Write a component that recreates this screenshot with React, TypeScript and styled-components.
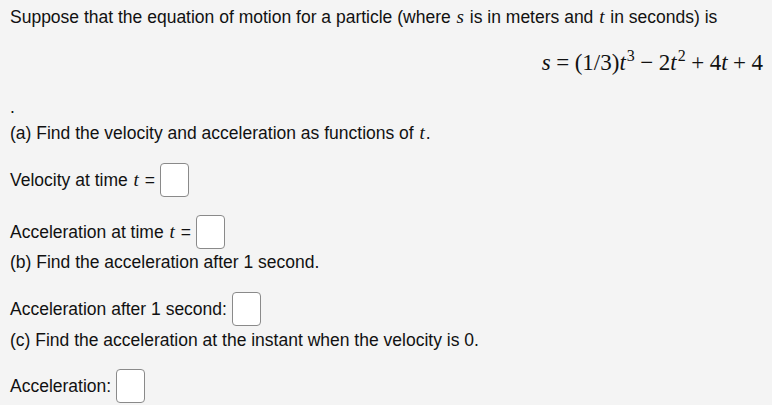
import styled, { createGlobalStyle } from 'styled-components';

const GlobalStyle = createGlobalStyle`
  html, body {
    margin: 0;
    padding: 0;
    background: #f4f4f4;
  }
  body {
    font-family: 'Liberation Sans', Arial, sans-serif;
    color: #111;
  }
`;

// --- Styled components ---
const Wrapper = styled.div`
  padding: 7px 10px 0 10px;
  font-size: 17.5px;
  line-height: 20px;
`;

const Text = styled.div<{ $top?: number }>`
  margin-top: ${(p) => p.$top ?? 0}px;
  white-space: nowrap;
`;

const Var = styled.span`
  font-family: 'Liberation Serif', 'Times New Roman', serif;
  font-style: italic;
  font-size: 19px;
  padding: 0 1px;
`;

const Equation = styled.div`
  text-align: right;
  margin-right: -1px;
  margin-top: 22px;
  height: 28px;
  font-family: 'Liberation Serif', 'Times New Roman', serif;
  font-size: 23px;
  line-height: 28px;
  white-space: nowrap;

  i {
    font-style: italic;
  }
`;

const Sup = styled.span`
  font-size: 16px;
  line-height: 0;
  position: relative;
  top: -9px;
  margin-left: 1px;
`;

const Op = styled.span`
  padding: 0 5.5px;
`;

const AnswerRow = styled.div<{ $top: number }>`
  display: flex;
  align-items: center;
  gap: 5px;
  height: 34px;
  margin-top: ${(p) => p.$top}px;
  white-space: nowrap;
`;

const AnswerBox = styled.span`
  display: inline-block;
  box-sizing: border-box;
  width: 29px;
  height: 34px;
  background: #fff;
  border: 1px solid #8a8a8a;
  border-radius: 4px;
`;

export default function App() {
  return (
    <>
      <GlobalStyle />
      <Wrapper>
        <Text>
          Suppose that the equation of motion for a particle (where <Var>s</Var> is in meters
          and <Var>t</Var> in seconds) is
        </Text>
        <Equation>
          <i>s</i>
          <Op>=</Op>
          (1/3)<i>t</i>
          <Sup>3</Sup>
          <Op>−</Op>2<i>t</i>
          <Sup>2</Sup>
          <Op>+</Op>4<i>t</i>
          <Op>+</Op>4
        </Equation>
        <Text $top={20}>.</Text>
        <Text $top={6}>
          (a) Find the velocity and acceleration as functions of <Var>t</Var>.
        </Text>
        <AnswerRow $top={20}>
          <span>
            Velocity at time <Var>t</Var> =
          </span>
          <AnswerBox />
        </AnswerRow>
        <AnswerRow $top={18}>
          <span>
            Acceleration at time <Var>t</Var> =
          </span>
          <AnswerBox />
        </AnswerRow>
        <Text $top={3}>(b) Find the acceleration after 1 second.</Text>
        <AnswerRow $top={20}>
          <span>Acceleration after 1 second:</span>
          <AnswerBox />
        </AnswerRow>
        <Text $top={4}>(c) Find the acceleration at the instant when the velocity is 0.</Text>
        <AnswerRow $top={19}>
          <span>Acceleration:</span>
          <AnswerBox />
        </AnswerRow>
      </Wrapper>
    </>
  );
}
